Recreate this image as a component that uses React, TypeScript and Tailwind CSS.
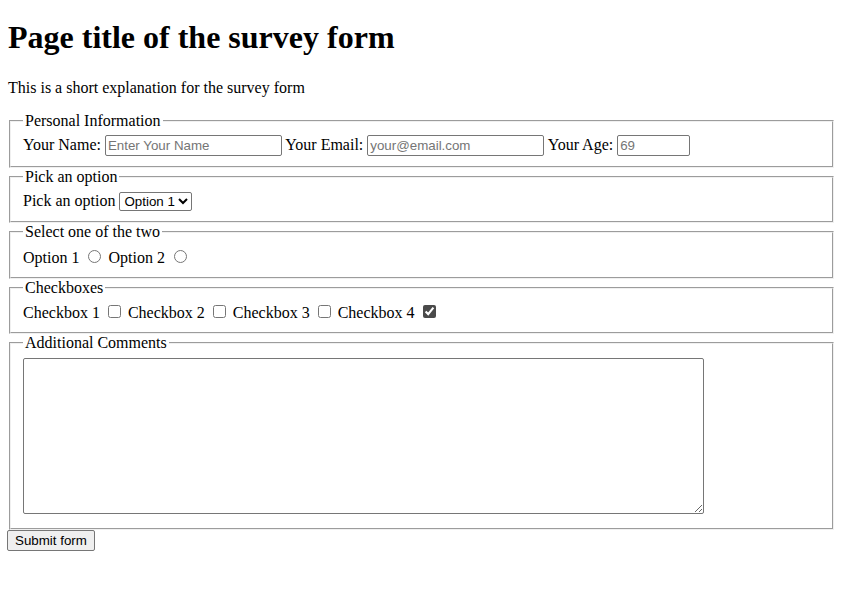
import { useState } from "react";

const inputCls =
  "h-[21px] border border-[#767676] rounded-[2px] bg-white px-[2px] py-[1px] text-[13.33px] font-['Liberation_Sans',Arial,sans-serif] text-black placeholder:text-[#757575] align-baseline";

const fieldsetCls =
  "mx-[1px] px-[12px] pt-[5.6px] pb-[10px] border-2 [border-style:groove] border-[#f0f0f0] min-w-min";

const legendCls = "px-[2px]";

const Radio = ({ name }: { name: string }) => (
  <input type="radio" name={name} className="mt-[3px] mr-[3px] ml-[5px] mb-0 align-baseline" />
);

const Checkbox = ({ checked }: { checked?: boolean }) => {
  const [on, setOn] = useState(!!checked);
  return (
    <input
      type="checkbox"
      checked={on}
      onChange={() => setOn(!on)}
      className="mt-[3px] mr-[3px] mb-[3px] ml-[4px] align-baseline accent-[#4a4a4a]"
    />
  );
};

export default function App() {
  return (
    <div className="m-[8px] font-['Liberation_Serif','Times_New_Roman',serif] text-[16px] leading-[normal] text-black">
      <h1 className="text-[32px] font-bold mt-[19.44px] mb-[22.44px]">Page title of the survey form</h1>
      <p className="mt-[16px] mb-[15px]">This is a short explanation for the survey form</p>

      <form onSubmit={(e) => e.preventDefault()}>
        <fieldset className={fieldsetCls}>
          <legend className={legendCls}>Personal Information</legend>
          <label>
            Your Name:{" "}
            <input type="text" placeholder="Enter Your Name" className={`${inputCls} w-[177px]`} />
          </label>{" "}
          <label>
            Your Email:{" "}
            <input type="email" placeholder="your@email.com" className={`${inputCls} w-[177px]`} />
          </label>{" "}
          <label>
            Your Age:{" "}
            <input type="number" placeholder="69" className={`${inputCls} w-[73px]`} />
          </label>
        </fieldset>

        <fieldset className={fieldsetCls}>
          <legend className={legendCls}>Pick an option</legend>
          <label>
            Pick an option{" "}
            <select className="border border-[#767676] rounded-[2px] bg-white text-[13.33px] font-['Liberation_Sans',Arial,sans-serif] text-black">
              <option>Option 1</option>
              <option>Option 2</option>
            </select>
          </label>
        </fieldset>

        <fieldset className={fieldsetCls}>
          <legend className={legendCls}>Select one of the two</legend>
          <label>
            Option 1 <Radio name="pick" />
          </label>{" "}
          <label>
            Option 2 <Radio name="pick" />
          </label>
        </fieldset>

        <fieldset className={fieldsetCls}>
          <legend className={legendCls}>Checkboxes</legend>
          <label>
            Checkbox 1 <Checkbox />
          </label>{" "}
          <label>
            Checkbox 2 <Checkbox />
          </label>{" "}
          <label>
            Checkbox 3 <Checkbox />
          </label>{" "}
          <label>
            Checkbox 4 <Checkbox checked />
          </label>
        </fieldset>

        <fieldset className={fieldsetCls}>
          <legend className={legendCls}>Additional Comments</legend>
          <textarea className="w-[681px] h-[156px] align-baseline border border-[#767676] rounded-[2px] bg-white px-[2px] py-[2px] text-[13.33px] font-['Liberation_Mono',monospace] resize" />
        </fieldset>

        <button
          type="submit"
          className="mx-[-1px] h-[21px] border border-[#767676] rounded-[2px] bg-[#efefef] px-[7px] py-[1px] text-[13.33px] font-['Liberation_Sans',Arial,sans-serif] text-black"
        >
          Submit form
        </button>
      </form>
    </div>
  );
}
